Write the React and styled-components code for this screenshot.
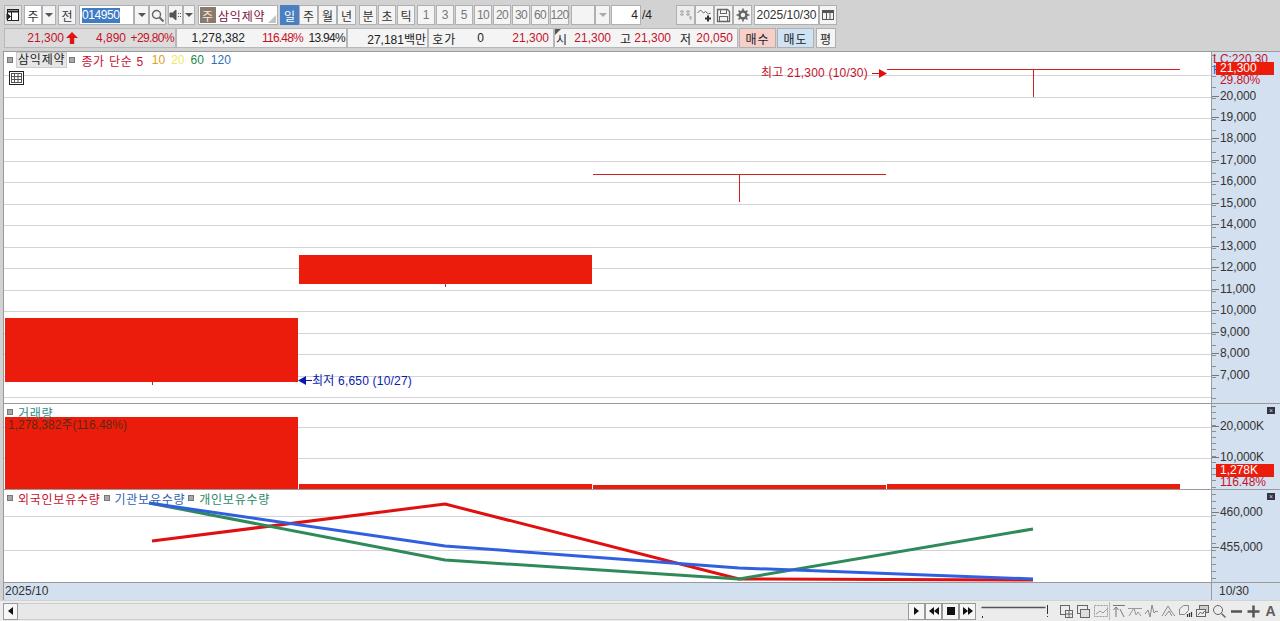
import styled, { createGlobalStyle } from "styled-components";

const FONT = `"Liberation Sans", "Noto Sans CJK KR", sans-serif`;
const RED = "#c4122a";
const BAR = "#ec1c0c";
const WICK = "#d42020";

const GlobalStyle = createGlobalStyle`
  html, body { margin: 0; padding: 0; background: #d2d2d2; overflow: hidden; }
  * { box-sizing: border-box; }
`;

const Page = styled.div`
  width: 1280px;
  height: 621px;
  font: 12px ${FONT};
  color: #222;
  display: flex;
  flex-direction: column;
  overflow: hidden;
  background: #d2d2d2;
`;

const Toolbar = styled.div`
  display: flex;
  height: 20px;
  margin: 5px 0 0 4px;
`;

const Btn = styled.div`
  width: ${(p) => p.$w || 18}px;
  margin-left: ${(p) => p.$ml || 0}px;
  height: 20px;
  flex: none;
  display: flex;
  align-items: center;
  justify-content: center;
  border: 1px solid ${(p) => (p.$active ? "#4a7fc1" : "#aeb0b2")};
  background: ${(p) => (p.$active ? "#4a7fc1" : p.$bg || "#f4f4f4")};
  color: ${(p) => (p.$active ? "#fff" : p.$muted ? "#777" : "#333")};
  font-size: 12px;
  white-space: nowrap;
  letter-spacing: ${(p) => (p.$tight ? "-0.6px" : 0)};
`;

const CodeInput = styled.div`
  width: 55px;
  margin-left: 3px;
  height: 20px;
  background: #fff;
  border: 1px solid #aeb0b2;
  padding: 2px 0 0 2px;
  flex: none;
`;

const Selected = styled.span`
  display: block;
  width: 38px;
  height: 15px;
  line-height: 15px;
  background: #3f7cc4;
  color: #fff;
  font-size: 12px;
  letter-spacing: -0.4px;
`;

const NameBox = styled.div`
  position: relative;
  width: 80px;
  margin-left: 3px;
  height: 20px;
  background: #fff;
  border: 1px solid #aeb0b2;
  display: flex;
  align-items: center;
  color: #7a1040;
  letter-spacing: 0.8px;
  flex: none;
  &::after {
    content: "";
    position: absolute;
    right: 1px;
    bottom: 1px;
    border-style: solid;
    border-width: 0 0 8px 8px;
    border-color: transparent transparent #c4c4c4 transparent;
  }
`;

const NameTag = styled.span`
  width: 16px;
  height: 16px;
  margin: 0 2px 0 1px;
  background: #8a7a6c;
  color: #efe6dc;
  display: flex;
  align-items: center;
  justify-content: center;
`;

const Arrow = styled.span`
  width: 0;
  height: 0;
  border-style: solid;
  border-width: 4px 4px 0 4px;
  border-color: ${(p) => p.$color || "#555"} transparent transparent transparent;
`;

const PageInput = styled.div`
  width: 30px;
  margin-left: 1px;
  height: 20px;
  background: #fff;
  border: 1px solid #aeb0b2;
  text-align: right;
  padding-right: 2px;
  line-height: 18px;
  flex: none;
`;

const PageTotal = styled.span`
  width: 24px;
  line-height: 20px;
  padding-left: 1px;
  flex: none;
`;

const InfoBar = styled.div`
  display: flex;
  height: 20px;
  margin: 3px 0 0 4px;
`;

const InfoCell = styled.div`
  width: ${(p) => p.$w}px;
  flex: none;
  height: 20px;
  display: flex;
  align-items: center;
  border: 1px solid #b8b8b8;
  background: ${(p) => p.$bg || "#f4f4f4"};
  position: relative;
  white-space: nowrap;
`;

const Val = styled.span`
  width: ${(p) => p.$w}px;
  flex: none;
  text-align: right;
  color: ${(p) => p.$color || "#222"};
  letter-spacing: ${(p) => p.$ls ?? 0}px;
`;

const Flag = styled.span`
  position: absolute;
  left: 0;
  top: 0;
  border-style: solid;
  border-width: 6px 6px 0 0;
  border-color: #555 transparent transparent transparent;
`;

const TradeBtn = styled.div`
  width: ${(p) => p.$w || 37}px;
  margin-left: ${(p) => p.$ml || 2}px;
  height: 20px;
  flex: none;
  display: flex;
  align-items: center;
  justify-content: center;
  background: ${(p) => p.$bg};
  border: 1px solid #b0b0b0;
  letter-spacing: 1px;
`;

const Chart = styled.div`
  margin: 3px 0 0 3px;
  width: 1277px;
  height: 550px;
  border-top: 1px solid #9a9a9a;
  border-left: 1px solid #9a9a9a;
  display: flex;
  flex-direction: column;
`;

const Pane = styled.div`
  height: ${(p) => p.$h}px;
  flex: none;
  display: flex;
  border-bottom: ${(p) => (p.$flat ? "none" : "1px solid #9a9a9a")};
`;

const Plot = styled.div`
  position: relative;
  width: 1207px;
  flex: none;
  background: #fff;
  overflow: hidden;
  svg { position: absolute; left: 0; top: 0; display: block; }
`;

const Axis = styled.div`
  position: relative;
  flex: 1;
  border-left: 1px solid #9a9a9a;
  overflow: hidden;
  background-color: #d3e0ef;
  background-image: repeating-linear-gradient(
    to bottom,
    #8a8f96 0,
    #8a8f96 1px,
    transparent 1px,
    transparent ${(p) => p.$step}px
  );
  background-size: 4px 100%;
  background-repeat: no-repeat;
  background-position: 0 ${(p) => p.$offset || 0}px;
`;

const AxisLabel = styled.span`
  position: absolute;
  left: ${(p) => p.$left ?? 8}px;
  line-height: 14px;
  color: ${(p) => p.$color || "#333"};
  white-space: nowrap;
  letter-spacing: -0.1px;
  &::before {
    content: "";
    position: absolute;
    left: -8px;
    top: 7px;
    width: 7px;
    height: 1px;
    background: #777;
    display: ${(p) => (p.$tick ? "block" : "none")};
  }
`;

const CurrentTag = styled.span`
  position: absolute;
  left: 4px;
  width: 58px;
  height: 13px;
  line-height: 13px;
  padding-left: 4px;
  background: ${BAR};
  color: #fff;
`;

const CloseBox = styled.span`
  position: absolute;
  right: 5px;
  top: ${(p) => p.$top}px;
  width: 8px;
  height: 7px;
  background: #334;
  color: #ddd;
  font-size: 7px;
  line-height: 7px;
  text-align: center;
`;

const Legend = styled.div`
  position: absolute;
  left: 3px;
  top: 0;
  display: flex;
  align-items: center;
  white-space: nowrap;
  height: 16px;
`;

const Square = styled.span`
  width: 6px;
  height: 6px;
  margin: 0 3px 0 ${(p) => p.$ml || 0}px;
  background: #a8a8a8;
  border: 1px solid #777;
  flex: none;
`;

const LegendName = styled.span`
  background: #e6e6e6;
  border: 1px solid #ccc;
  padding: 0 1px;
  line-height: 14px;
  letter-spacing: 0.8px;
`;

const LegendText = styled.span`
  color: ${(p) => p.$color};
  margin-left: ${(p) => p.$ml || 0}px;
  letter-spacing: ${(p) => p.$ls ?? 0}px;
`;

const GridIcon = styled.div`
  position: absolute;
  left: 5px;
  top: 19px;
  width: 15px;
  height: 14px;
  border: 1px solid #222;
  background: #fff;
  display: flex;
  align-items: center;
  justify-content: center;
`;

const Note = styled.span`
  position: absolute;
  left: ${(p) => p.$left}px;
  top: ${(p) => p.$top}px;
  color: ${(p) => p.$color};
  white-space: nowrap;
  letter-spacing: ${(p) => p.$ls ?? 0.2}px;
  line-height: 14px;
`;

const DateBar = styled.div`
  height: 18px;
  flex: none;
  display: flex;
  background: #d3e0ef;
  border-top: 1px solid #9a9a9a;
  line-height: 17px;
`;

const DateLeft = styled.div`
  width: 1207px;
  padding-left: 1px;
  flex: none;
  color: #333;
`;

const DateRight = styled.div`
  flex: 1;
  border-left: 1px solid #9a9a9a;
  padding-left: 7px;
  color: #333;
`;

const BottomBar = styled.div`
  height: 20px;
  flex: none;
  margin-top: 1px;
  display: flex;
  align-items: center;
  background: #ececec;
`;

const ScrollBtn = styled.div`
  width: ${(p) => p.$w || 17}px;
  height: 17px;
  flex: none;
  margin-left: ${(p) => p.$ml || 0}px;
  display: flex;
  align-items: center;
  justify-content: center;
  background: #f6f6f6;
  border: 1px solid #999;
  color: #111;
`;

const ScrollTrack = styled.div`
  width: 890px;
  height: 17px;
  flex: none;
  background: #e8e8e8;
  border-top: 1px solid #ccc;
  border-bottom: 1px solid #ccc;
`;

const Tools = styled.div`
  display: flex;
  align-items: center;
  flex: none;
  margin-left: 5px;
`;

const Slider = styled.div`
  width: 77px;
  flex: none;
  display: flex;
  align-items: center;
`;

const ToolCell = styled.div`
  width: 17px;
  height: 18px;
  flex: none;
  display: flex;
  align-items: center;
  justify-content: center;
  border-left: ${(p) => (p.$divider ? "1px solid #bbb" : "none")};
`;

const ToolA = styled.span`
  font: bold 14px ${FONT};
  color: #5c5c5c;
`;

/* ---- data ---- */

const PW = 1207;
const price = (v) => 375.5 - (v - 7000) * 0.02146;
const priceTicks = [20000, 19000, 18000, 17000, 16000, 15000, 14000, 13000, 12000, 11000, 10000, 9000, 8000, 7000];
const gridYs = [21000, ...priceTicks, 6000].map((v) => Math.round(price(v)) - 1 + 0.5);

const Pts = ({ color, points }) => (
  <polyline points={points} fill="none" stroke={color} strokeWidth="3" strokeLinejoin="round" />
);

const Ico = ({ w = 16, h = 16, children, stroke = "#555" }) => (
  <svg width={w} height={h} viewBox={`0 0 ${w} ${h}`} fill="none" stroke={stroke} strokeWidth="1" style={{ position: "static" }}>
    {children}
  </svg>
);

const periods = ["일", "주", "월", "년"];
const units = ["분", "초", "틱"];
const minutes = ["1", "3", "5", "10", "20", "30", "60", "120"];

const App = () => (
  <Page>
    <GlobalStyle />
    <Toolbar>
      <Btn $w={18} $bg="#e4e4e4">
        <Ico w={14} h={14} stroke="#222">
          <rect x="1.5" y="1.5" width="11" height="11" fill="#fff" />
          <path d="M1.5 3.5h11" strokeWidth="2" />
          <path d="M5.5 3v10" />
          <path d="M1 5.5l3.5 3-3.5 3z" fill="#222" />
        </Ico>
      </Btn>
      <Btn $w={18} $ml={2} $bg="#fff">주</Btn>
      <Btn $w={14}><Arrow /></Btn>
      <Btn $w={18} $ml={2}>전</Btn>
      <CodeInput><Selected>014950</Selected></CodeInput>
      <Btn $w={15}><Arrow /></Btn>
      <Btn $w={17}>
        <Ico w={13} h={13} stroke="#666">
          <circle cx="5.5" cy="5.5" r="4" strokeWidth="1.4" />
          <path d="M8.5 8.5l4 4" strokeWidth="2" />
        </Ico>
      </Btn>
      <Btn $w={15} $ml={2}>
        <Ico w={13} h={12}>
          <path d="M1 4h2.5L7 1v10L3.5 8H1z" fill="#555" />
          <path d="M9.5 4v1M9.5 7v1M11.5 4v1M11.5 7v1" />
        </Ico>
      </Btn>
      <Btn $w={12}><Arrow /></Btn>
      <NameBox><NameTag>주</NameTag>삼익제약</NameBox>
      {periods.map((t, i) => (
        <Btn key={t + i} $w={19} $ml={i === 0 ? 2 : 0} $active={i === 0}>{t}</Btn>
      ))}
      {units.map((t, i) => (
        <Btn key={t} $w={18} $ml={i === 0 ? 3 : 1}>{t}</Btn>
      ))}
      {minutes.map((t, i) => (
        <Btn key={t} $w={t === "120" ? 19 : 18} $ml={i === 0 ? 2 : 1} $muted $tight={t.length > 1}>{t}</Btn>
      ))}
      <Btn $w={24} $ml={2} />
      <Btn $w={15}><Arrow $color="#aaa" /></Btn>
      <PageInput>4</PageInput>
      <PageTotal>/4</PageTotal>
      <Btn $w={19} $ml={11} $bg="#ececec">
        <Ico w={15} h={14} stroke="#b4b4b4">
          <path d="M2 3.5h4M2 6.5h4M4 2v6M8 3.5h4M8 6.5h4M10 2v6M11 9.5h3M12.5 8v4" strokeWidth="1.4" />
        </Ico>
      </Btn>
      <Btn $w={19}>
        <Ico w={15} h={14} stroke="#666">
          <path d="M0.5 5l3-3 3 3 2-1.5 3 2.5 2-1" />
          <path d="M8 10.5h6M11 7.5v6" strokeWidth="2" stroke="#333" />
        </Ico>
      </Btn>
      <Btn $w={19}>
        <Ico w={15} h={15} stroke="#666">
          <path d="M1.5 1.5h10l2 2v10h-12z" strokeWidth="1.3" />
          <rect x="4.5" y="1.5" width="6" height="4" />
          <rect x="3.5" y="8.5" width="8" height="5" />
        </Ico>
      </Btn>
      <Btn $w={19}>
        <Ico w={14} h={14} stroke="#666">
          <circle cx="7" cy="7" r="3.5" strokeWidth="2.5" />
          <path d="M7 0.5v2.5M7 11v2.5M0.5 7H3M11 7h2.5M2.5 2.5l2 2M9.5 9.5l2 2M11.5 2.5l-2 2M4.5 9.5l-2 2" strokeWidth="1.6" />
        </Ico>
      </Btn>
      <Btn $w={65} $ml={2} $bg="#fff">2025/10/30</Btn>
      <Btn $w={18}>
        <Ico w={14} h={12} stroke="#555">
          <rect x="1.5" y="1.5" width="11" height="9" />
          <path d="M1.5 3h11" strokeWidth="2" />
          <path d="M5.5 4v6M9 4v6" />
        </Ico>
      </Btn>
    </Toolbar>

    <InfoBar>
      <InfoCell $w={172} $bg="#dcdcdc">
        <Val $w={59} $color={RED}>21,300</Val>
        <svg width="12" height="12" viewBox="0 0 12 12" style={{ marginLeft: 2, flex: "none" }}>
          <path d="M6 0l6 6H8.2v6H3.8V6H0z" fill="#e01414" />
        </svg>
        <Val $w={48} $color={RED}>4,890</Val>
        <Val $w={48} $color={RED} $ls={-0.6}>+29.80%</Val>
      </InfoCell>
      <InfoCell $w={171}>
        <Val $w={68}>1,278,382</Val>
        <Val $w={58} $color={RED} $ls={-0.8}>116.48%</Val>
        <Val $w={42} $ls={-0.7}>13.94%</Val>
      </InfoCell>
      <InfoCell $w={81}>
        <Val $w={78}>27,181백만</Val>
      </InfoCell>
      <InfoCell $w={126}>
        <Val $w={27} $ls={0.8}>호가</Val>
        <Val $w={28}>0</Val>
        <Val $w={65} $color={RED}>21,300</Val>
      </InfoCell>
      <InfoCell $w={184}>
        <Flag />
        <Val $w={12}>시</Val>
        <Val $w={44} $color={RED}>21,300</Val>
        <Val $w={20}>고</Val>
        <Val $w={40} $color={RED}>21,300</Val>
        <Val $w={20}>저</Val>
        <Val $w={42} $color={RED}>20,050</Val>
      </InfoCell>
      <TradeBtn $bg="#f6cfc9" $ml={1}>매수</TradeBtn>
      <TradeBtn $bg="#cfe3f7" $ml={1}>매도</TradeBtn>
      <TradeBtn $bg="#f4f4f4" $ml={2} $w={20}>평</TradeBtn>
    </InfoBar>

    <Chart>
      <Pane $h={352}>
        <Plot>
          <svg width={PW} height="352">
            <g transform="translate(0 1)">
              {gridYs.map((y) => (
                <line key={y} x1="0" x2={PW} y1={y - 52} y2={y - 52} stroke="#d4d4d8" />
              ))}
              <rect x="1" y="265" width="293" height="64" fill={BAR} />
              <line x1="148.5" x2="148.5" y1="329" y2="332" stroke={WICK} />
              <rect x="295" y="202" width="293" height="29" fill={BAR} />
              <line x1="441.5" x2="441.5" y1="231" y2="234" stroke={WICK} />
              <line x1="589" x2="882" y1="121.5" y2="121.5" stroke={WICK} />
              <line x1="735.5" x2="735.5" y1="121" y2="149" stroke={WICK} />
              <line x1="883" x2="1176" y1="16.5" y2="16.5" stroke={WICK} />
              <line x1="1029.5" x2="1029.5" y1="16" y2="44" stroke={WICK} />
              <path d="M868 20.5h8" stroke="#d01010" />
              <path d="M875 16l8 4.5-8 4.5z" fill="#e01010" />
              <path d="M302 327.5h6" stroke="#0a1ab0" />
              <path d="M302 323l-8 4.5 8 4.5z" fill="#0a1ab0" />
            </g>
          </svg>
          <Note $left={757} $top={14} $color={RED}>최고 21,300 (10/30)</Note>
          <Note $left={308} $top={322} $color="#0a1ab0">최저 6,650 (10/27)</Note>
          <Legend>
            <Square />
            <LegendName>삼익제약</LegendName>
            <Square $ml={2} />
            <LegendText $color="#c8102e" $ml={3} $ls={0.7}>종가 단순 5</LegendText>
            <LegendText $color="#e0a020" $ml={8}>10</LegendText>
            <LegendText $color="#f0e860" $ml={6}>20</LegendText>
            <LegendText $color="#1f8a4a" $ml={6}>60</LegendText>
            <LegendText $color="#2f6fb8" $ml={7}>120</LegendText>
          </Legend>
          <GridIcon>
            <Ico w={11} h={10} stroke="#555">
              <rect x="0.5" y="0.5" width="10" height="9" />
              <path d="M0.5 3.5h10M0.5 6.5h10M3.5 .5v9M7 .5v9" />
            </Ico>
          </GridIcon>
        </Plot>
        <Axis $step={10.73} $offset={3}>
          <AxisLabel $color={RED} $left={1} style={{ top: 0 }}>L</AxisLabel>
          <AxisLabel $color={RED} style={{ top: 0 }}>C:220.30</AxisLabel>
          <AxisLabel $color="#2f5fb0" $left={1} style={{ top: 11 }}>H</AxisLabel>
          <CurrentTag style={{ top: 10 }}>21,300</CurrentTag>
          <AxisLabel $color={RED} style={{ top: 21 }}>29.80%</AxisLabel>
          {priceTicks.map((v) => (
            <AxisLabel key={v} $tick style={{ top: Math.round(price(v)) - 60 }}>
              {v.toLocaleString("en-US")}
            </AxisLabel>
          ))}
        </Axis>
      </Pane>

      <Pane $h={86}>
        <Plot>
          <svg width={PW} height="86">
            <line x1="0" x2={PW} y1="23.5" y2="23.5" stroke="#d4d4d8" />
            <line x1="0" x2={PW} y1="54.5" y2="54.5" stroke="#d4d4d8" />
            <rect x="1" y="13" width="293" height="72" fill={BAR} />
            <rect x="295" y="80" width="293" height="5" fill={BAR} />
            <rect x="589" y="81" width="293" height="4" fill={BAR} />
            <rect x="883" y="80" width="293" height="5" fill={BAR} />
          </svg>
          <Legend>
            <Square />
            <LegendText $color="#2a8a8a" $ml={2} $ls={0.7}>거래량</LegendText>
          </Legend>
          <Note $left={4} $top={14} $color="#5a2a10" $ls={0}>1,278,382주(116.48%)</Note>
        </Plot>
        <Axis $step={6.2} $offset={2}>
          <CloseBox $top={3}>×</CloseBox>
          <AxisLabel $tick style={{ top: 15 }}>20,000K</AxisLabel>
          <AxisLabel $tick style={{ top: 46 }}>10,000K</AxisLabel>
          <CurrentTag style={{ top: 60 }}>1,278K</CurrentTag>
          <AxisLabel $color={RED} $left={8} style={{ top: 71 }}>116.48%</AxisLabel>
        </Axis>
      </Pane>

      <Pane $h={92} $flat>
        <Plot>
          <svg width={PW} height="92">
            <line x1="0" x2={PW} y1="26.5" y2="26.5" stroke="#d4d4d8" />
            <line x1="0" x2={PW} y1="60.5" y2="60.5" stroke="#d4d4d8" />
            <Pts color="#e01010" points="148,51 441,14 735,89 1029,90" />
            <Pts color="#2f8a5a" points="145,13 441,70 735,89 1029,39" />
            <Pts color="#3060e0" points="145,13 441,56 735,78 1029,89" />
          </svg>
          <Legend>
            <Square />
            <LegendText $color="#c8102e" $ml={2} $ls={0.75}>외국인보유수량</LegendText>
            <Square $ml={3} />
            <LegendText $color="#2f5fb0" $ml={2} $ls={0.75}>기관보유수량</LegendText>
            <Square $ml={3} />
            <LegendText $color="#2a8a6a" $ml={2} $ls={0.75}>개인보유수량</LegendText>
          </Legend>
        </Plot>
        <Axis $step={7} $offset={4}>
          <CloseBox $top={3}>×</CloseBox>
          <AxisLabel $tick style={{ top: 15 }}>460,000</AxisLabel>
          <AxisLabel $tick style={{ top: 50 }}>455,000</AxisLabel>
        </Axis>
      </Pane>

      <DateBar>
        <DateLeft>2025/10</DateLeft>
        <DateRight>10/30</DateRight>
      </DateBar>
    </Chart>

    <BottomBar>
      <ScrollBtn $ml={3} $w={15}>
        <svg width="6" height="8"><path d="M5 0v8L0 4z" fill="#111" /></svg>
      </ScrollBtn>
      <ScrollTrack />
      <ScrollBtn>
        <svg width="6" height="8"><path d="M0 0v8l5-4z" fill="#111" /></svg>
      </ScrollBtn>
      <ScrollBtn>
        <svg width="10" height="8"><path d="M5 0v8L0 4zM10 0v8L5 4z" fill="#111" /></svg>
      </ScrollBtn>
      <ScrollBtn>
        <svg width="8" height="8"><rect width="8" height="8" fill="#111" /></svg>
      </ScrollBtn>
      <ScrollBtn>
        <svg width="10" height="8"><path d="M0 0v8l5-4zM5 0v8l5-4z" fill="#111" /></svg>
      </ScrollBtn>
      <Tools>
        <Slider>
          <svg width="70" height="14" viewBox="0 0 70 14" fill="none" stroke="#555">
            <path d="M0.5 3.5h64" strokeWidth="1.5" />
            <path d="M66.5 1v9M66.5 12v1" stroke="#333" />
            <path d="M1.5 12v2" stroke="#333" />
          </svg>
        </Slider>
        <ToolCell>
          <Ico w={15} h={14} stroke="#666">
            <rect x="1.5" y="1.5" width="9" height="9" />
            <rect x="6.5" y="6.5" width="7" height="7" fill="#eee" />
            <path d="M10 7v6M7 10h6" />
          </Ico>
        </ToolCell>
        <ToolCell>
          <Ico w={15} h={14} stroke="#666">
            <rect x="1.5" y="1.5" width="10" height="8" />
            <rect x="4.5" y="5.5" width="9" height="8" fill="#ddd" />
          </Ico>
        </ToolCell>
        <ToolCell>
          <Ico w={16} h={14} stroke="#999">
            <rect x="1.5" y="1.5" width="13" height="11" strokeDasharray="2 1" />
            <path d="M3 10l4-3 3 2 4-4" />
          </Ico>
        </ToolCell>
        <ToolCell $divider>
          <Ico w={15} h={14} stroke="#777">
            <path d="M2 1.5h12M5 3v10M2.5 6L5 3l2.500 3M9 5l4 8" />
          </Ico>
        </ToolCell>
        <ToolCell>
          <Ico w={16} h={14} stroke="#999">
            <path d="M1 4.500h14M2 12l5-8 2 7 2-3 3 4" />
          </Ico>
        </ToolCell>
        <ToolCell>
          <Ico w={15} h={14} stroke="#888">
            <path d="M1 10l3-4 2 7 2-12 2 8 2-2 2 1" />
          </Ico>
        </ToolCell>
        <ToolCell>
          <Ico w={15} h={14} stroke="#888">
            <path d="M1 12l6-10 3 5 4 5M4 12l4-5 3 5" />
          </Ico>
        </ToolCell>
        <ToolCell>
          <Ico w={15} h={14} stroke="#888">
            <path d="M1.500 9V5l4-3.500h5v5l-4 4h-5z" />
            <path d="M9.500 13v-3M11.500 13V9M13.500 13V8" stroke="#333" strokeWidth="1.2" />
          </Ico>
        </ToolCell>
        <ToolCell>
          <Ico w={15} h={14} stroke="#666">
            <rect x="4.500" y="1.500" width="9" height="7" fill="#ccc" />
            <rect x="1.500" y="5.500" width="9" height="7" fill="#eee" />
            <path d="M3 11l2.500-3 2 2 2-3" />
          </Ico>
        </ToolCell>
        <ToolCell>
          <Ico w={15} h={14} stroke="#666">
            <circle cx="6" cy="6" r="4.500" />
            <path d="M9.500 9.500l4 4" strokeWidth="1.500" />
          </Ico>
        </ToolCell>
        <ToolCell>
          <Ico w={13} h={14}>
            <path d="M1 7.500h11" strokeWidth="2.500" />
          </Ico>
        </ToolCell>
        <ToolCell>
          <Ico w={13} h={14}>
            <path d="M0.500 7.500h12M6.500 1.500v12" strokeWidth="2.500" />
          </Ico>
        </ToolCell>
        <ToolCell><ToolA>A</ToolA></ToolCell>
      </Tools>
    </BottomBar>
  </Page>
);

export default App;
